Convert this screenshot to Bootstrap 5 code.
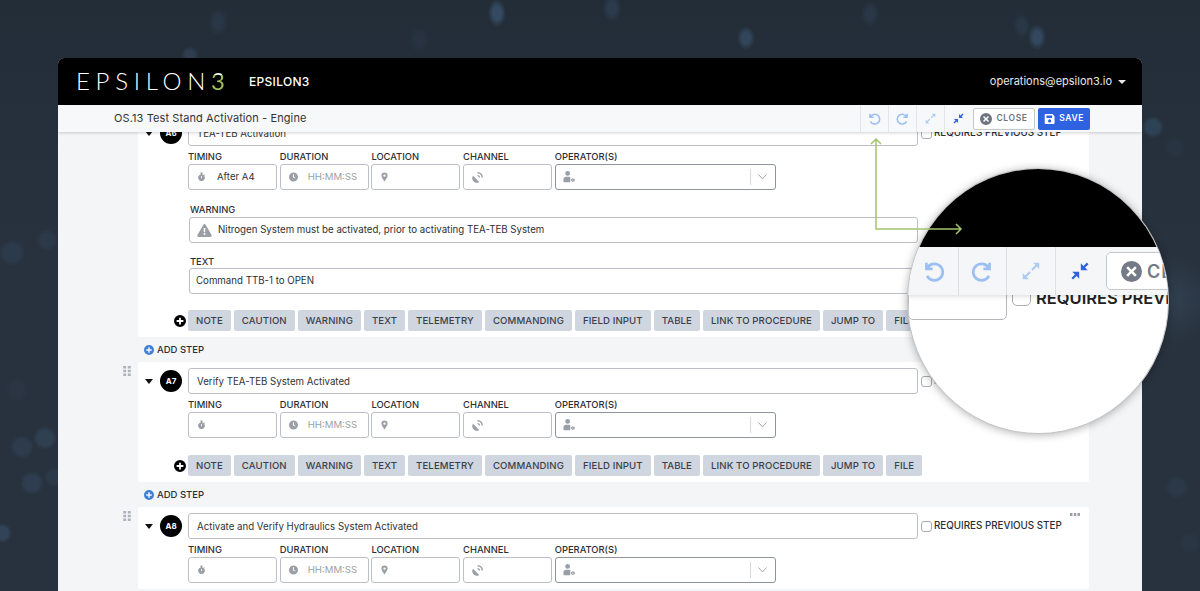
<!DOCTYPE html>
<html lang="en">
<head>
  <meta charset="UTF-8">
  <meta name="viewport" content="width=device-width, initial-scale=1.0">
  <title>Epsilon3 - Procedure Editor</title>
  <link href="https://cdn.jsdelivr.net/npm/bootstrap@5.3.3/dist/css/bootstrap.min.css" rel="stylesheet">
  <script src="https://cdn.jsdelivr.net/npm/bootstrap@5.3.3/dist/js/bootstrap.bundle.min.js" defer></script>
  <style>
    html, body { height: 100%; }
    body {
      position: relative;
      overflow: hidden;
      padding: 58px 58px 0;
      font-family: Inter, "Liberation Sans", sans-serif;
      color: #2b2f35;
      background-color: #28323e;
      background-image:
        radial-gradient(ellipse 9px 14px at 497px 13px, rgba(75,115,155,.42) 45%, transparent),
        radial-gradient(ellipse 9px 14px at 612px 8px, rgba(70,110,150,.22) 45%, transparent),
        radial-gradient(ellipse 9px 12px at 746px 38px, rgba(75,115,155,.35) 45%, transparent),
        radial-gradient(ellipse 9px 13px at 1037px 37px, rgba(75,115,155,.38) 45%, transparent),
        radial-gradient(ellipse 9px 12px at 1022px 26px, rgba(70,110,150,.14) 45%, transparent),
        radial-gradient(ellipse 10px 14px at 218px 22px, rgba(70,110,150,.14) 45%, transparent),
        radial-gradient(ellipse 10px 13px at 419px 40px, rgba(70,110,150,.08) 45%, transparent),
        radial-gradient(ellipse 9px 9px at 190px 55px, rgba(70,110,150,.25) 45%, transparent),
        radial-gradient(ellipse 9px 13px at 870px 14px, rgba(70,110,150,.14) 45%, transparent),
        radial-gradient(circle 13px at 12px 253px, rgba(60,95,130,.2) 60%, transparent),
        radial-gradient(circle 11px at 47px 240px, rgba(60,95,130,.15) 60%, transparent),
        radial-gradient(circle 12px at 17px 390px, rgba(60,95,130,.08) 60%, transparent),
        radial-gradient(circle 12px at 22px 447px, rgba(70,105,145,.18) 60%, transparent),
        radial-gradient(circle 12px at 45px 438px, rgba(70,105,145,.25) 60%, transparent),
        radial-gradient(circle 12px at 32px 483px, rgba(70,105,145,.22) 60%, transparent),
        radial-gradient(circle 10px at 54px 477px, rgba(70,105,145,.12) 60%, transparent),
        radial-gradient(circle 10px at 2px 533px, rgba(70,105,145,.3) 60%, transparent),
        radial-gradient(circle 11px at 1153px 127px, rgba(60,100,135,.35) 60%, transparent),
        radial-gradient(circle 11px at 1175px 147px, rgba(60,95,130,.08) 60%, transparent),
        radial-gradient(circle 12px at 1177px 487px, rgba(60,95,130,.14) 60%, transparent),
        radial-gradient(circle 11px at 1190px 543px, rgba(60,95,130,.08) 60%, transparent),
        radial-gradient(circle 45px at 1172px 300px, rgba(70,95,120,.3), transparent),
        linear-gradient(180deg, #232d38, #28323e 40%);
    }
    .app-window { width: 1084px; height: 533px; border-radius: 6px 6px 0 0; overflow: hidden; background: #f3f5f7; }
    .app-head { height: 47px; background: #000; padding: 0 16px 2px 18px; }
    .brand-word { font-family: Lato, sans-serif; font-weight: 300; font-size: 24px; letter-spacing: 5.7px; line-height: 1; color: #fff; width: 173px; white-space: nowrap; }
    .brand-word span { font-weight: 400; color: transparent; background: linear-gradient(#fff 32%, #9fc25f 32%); -webkit-background-clip: text; background-clip: text; }
    .brand-name { font-size: 12px; font-weight: 500; letter-spacing: .3px; color: #fff; margin-top: 2px; }
    .user-menu { font-size: 11px; color: #e8e8e8; margin-top: 2px; }
    .user-menu::after { margin-left: 6px; vertical-align: .1em; border-top-width: .37em; border-left-width: .37em; border-right-width: .37em; }

    .tool-bar { position: relative; z-index: 2; height: 27px; background: #f7f8f9; box-shadow: 0 1px 3px rgba(0,0,0,.18); padding-left: 56px; }
    .proc-title { font-size: 11px; letter-spacing: .1px; color: #333; }
    .tool-cell { width: 28px; height: 27px; border-left: 1px solid #e3e5e8; }
    .tool-cell svg { width: 13px; height: 13px; }
    .ic-soft { color: #9dc0f2; }
    .ic-pale { color: #aecbf1; }
    .ic-strong { color: #2f62e0; }
    .btn-close-proc, .btn-save-proc { height: 22px; padding: 0 6px; font-size: 8.5px; font-weight: 600; letter-spacing: .6px; border-radius: 2px; line-height: 1; }
    .btn-close-proc { width: 62px; margin-left: 1px; background: #fff; border: 1px solid #c4c8cd; color: #6d7480; }
    .btn-save-proc { width: 52px; margin: 0 52px 0 3px; background: #2f62e0; border: 0; color: #fff; }
    .btn-close-proc svg, .btn-save-proc svg { width: 12px; height: 12px; }

    .step-scroll { height: 474px; overflow: hidden; padding: 0 53px 0 60px; }
    .step-scroll > :first-child { margin-top: -18px; }
    .grip-col { width: 20px; padding: 4px 0 0 5px; }
    .grip-col svg { display: block; width: 8px; height: 10px; color: #aeb3ba; }
    .step-card { position: relative; width: 951px; background: #fff; padding: 6px 0 6px 7px; border-radius: 2px; }
    .step-left { width: 43px; height: 26px; }
    .caret-ic { width: 8px; height: 5px; margin-right: 7px; color: #111; }
    .step-num { width: 22px; height: 22px; border-radius: 50%; background: #000; color: #fff; font-size: 8px; font-weight: 700; }
    .title-input.form-control { width: 730px; height: 26px; min-height: 0; padding: 0 8px; font-size: 9.7px; color: #333; border: 1px solid #bcc0c6; border-radius: 3px; }
    .req-wrap { margin-left: 3px; font-size: 9.8px; font-weight: 500; white-space: nowrap; }
    .req-wrap .form-check-input { width: 11px; height: 11px; margin: 0 2px 0 0; border-color: #a9adb3; border-radius: 3px; }
    .dots-ic { position: absolute; right: 9px; top: 6px; width: 10px; height: 3px; color: #9aa0a7; }

    .field-label { height: 13px; margin-bottom: 1px; font-size: 9.4px; line-height: 13px; font-weight: 500; color: #2b2f35; }
    .field-row { gap: 0 2.7px; margin-top: 4px; }
    .field-box { width: 89px; height: 26px; padding-left: 8px; font-size: 9.6px; border: 1px solid #bcc0c6; border-radius: 3px; color: #333; }
    .field-box svg { width: 9px; height: 10px; color: #9a9fa6; flex: none; }
    .field-box .field-txt { margin-left: 11px; }
    .field-box .field-hint { margin-left: 10px; color: #9a9fa6; }
    .field-box svg.dish-ic { width: 11px; height: 11px; margin-left: 0; }
    .field-op { width: 221px; border-color: #8f949b; padding-left: 7px; }
    .field-box svg.op-ic { width: 13px; height: 12px; }
    .op-arrow { margin-left: auto; width: 25px; height: 16px; border-left: 1px solid #d5d8dc; }
    .op-arrow svg { width: 9px; height: 6px; color: #a2a7ad; }

    .block-wrap { margin-left: 1px; }
    .block-warn { margin-top: 13px; }
    .block-text { margin-top: 12px; }
    .block-label { height: 13px; margin-left: 1px; font-size: 9.4px; line-height: 13px; font-weight: 500; }
    .block-box { width: 729px; height: 26px; padding-left: 6px; font-size: 9.7px; border: 1px solid #bcc0c6; border-radius: 3px; }
    .block-box svg { width: 15px; height: 13px; margin: 0 6px 0 1px; color: #9a9fa6; }
    .block-warn .block-box { margin-top: 1px; }

    .add-row { margin-top: 17px; gap: 0 3px; }
    .block-text + .add-row { margin-top: 16px; }
    .add-ic { width: 12px; height: 12px; margin: 0 -1px 0 -14px; color: #000; }
    .add-chip.btn { height: 21px; padding: 0 8px; font-size: 9.6px; font-weight: 500; letter-spacing: .12px; line-height: 1; color: #39404a; background: #cfd6e0; border: 0; border-radius: 2px; white-space: nowrap; }

    .add-step { height: 25px; padding: 1px 0 0 26px; font-size: 9.5px; font-weight: 500; color: #2b2f35; }
    .add-step svg { width: 10px; height: 10px; margin-right: 3px; color: #3f7fd8; }

    .guide-arrow { position: absolute; left: 0; top: 0; z-index: 6; width: 1200px; height: 591px; pointer-events: none; }
    .zoom-lens { position: absolute; z-index: 5; left: 907px; top: 168px; width: 262px; height: 266px; border-radius: 50%; overflow: hidden; background: #fff; border: 1px solid #c2c4c6; box-shadow: 0 1px 8px rgba(0,0,0,.3); }
    .lens-black { height: 78px; background: #000; }
    .lens-tools { position: relative; z-index: 1; height: 48px; padding-left: 2px; background: #f5f6f8; box-shadow: 0 2px 4px rgba(0,0,0,.12); }
    .lens-cell { width: 48.500px; height: 48px; border-right: 1px solid #dcdee1; flex: none; }
    .lens-cell svg { width: 22px; height: 22px; }
    .lens-close { height: 38px; width: 110px; margin-left: 2px; padding-left: 14px; flex: none; font-size: 18px; font-weight: 600; letter-spacing: 1px; color: #747b87; background: #fff; border: 1px solid #c4c8cd; border-radius: 5px; }
    .lens-close svg { width: 21px; height: 21px; margin-right: 5px; }
    .lens-under { margin-top: -15px; }
    .lens-input { width: 99px; height: 40px; flex: none; border: 1px solid #b5b8bd; border-radius: 5px; }
    .lens-check { width: 19px; height: 26px; flex: none; margin: 0 5px 0 5px; border: 1px solid #a9adb3; border-radius: 5px; }
    .lens-req { flex: none; margin-top: 9px; font-size: 16.5px; font-weight: 600; line-height: 18px; white-space: nowrap; color: #222; }
  </style>
</head>
<body>
  <svg width="0" height="0" class="position-absolute">
    <symbol id="i-watch" viewBox="0 0 16 16"><path fill="currentColor" d="M6 0h4v2H9v1.100A6 6 0 1 1 7 3.100V2H6zM7.300 6v4h1.400V6zM13 3l1.500 1.400-1 1L12 4z"/></symbol>
    <symbol id="i-clock" viewBox="0 0 16 16"><path fill="currentColor" fill-rule="evenodd" d="M8 0a8 8 0 1 1 0 16A8 8 0 0 1 8 0zM7 3v5.600l3.600 2.200.9-1.300L8.800 7.800V3z"/></symbol>
    <symbol id="i-pin" viewBox="0 0 16 16"><path fill="currentColor" fill-rule="evenodd" d="M8 0a5.500 5.500 0 0 0-5.500 5.500C2.500 9.300 8 16 8 16s5.500-6.700 5.500-10.500A5.500 5.500 0 0 0 8 0zm0 3.400a2.100 2.100 0 1 1 0 4.200 2.100 2.100 0 0 1 0-4.200z"/></symbol>
    <symbol id="i-dish" viewBox="0 0 16 16"><path fill="currentColor" d="M1.500 5.500l9 9A6.500 6.500 0 0 1 1.500 5.500zM8 0a8 8 0 0 1 8 8h-2.200A5.800 5.800 0 0 0 8 2.200zM8 4.200A3.800 3.800 0 0 1 11.800 8H9.800A1.800 1.800 0 0 0 8 6.200z"/></symbol>
    <symbol id="i-usercog" viewBox="0 0 16 16"><path fill="currentColor" fill-rule="evenodd" d="M5.500 0a3.200 3.200 0 1 1 0 6.400A3.200 3.200 0 0 1 5.500 0zM0 15v-4a3.500 3.500 0 0 1 3.500-3.500h4A3.500 3.500 0 0 1 9 8v7zM13 9.500l.6 1 1.100-.3.600 1-.8.800.8.800-.6 1-1.100-.3-.6 1h-1.200l-.3-1-1.100.3-.6-1 .8-.8-.8-.8.6-1 1.100.3.3-1zm-.6 1.700a.8.800 0 1 0 0 1.600.8.800 0 0 0 0-1.600z"/></symbol>
    <symbol id="i-warn" viewBox="0 0 18 16"><path fill="currentColor" fill-rule="evenodd" d="M9 0c.6 0 1.100.3 1.400.8l7.300 12.700c.6 1-.1 2.500-1.400 2.500H1.700C.4 16-.3 14.500.3 13.500L7.600.8C7.900.3 8.400 0 9 0zM8 5l.2 5h1.600L10 5zm1 6.200a1.200 1.200 0 1 0 0 2.400 1.200 1.200 0 0 0 0-2.400z"/></symbol>
    <symbol id="i-undo" viewBox="0 0 16 16"><path fill="none" stroke="currentColor" stroke-width="2" d="M2.500 2v4.500H7M2.800 6.500A6 6 0 1 1 3 11.500"/></symbol>
    <symbol id="i-redo" viewBox="0 0 16 16"><path fill="none" stroke="currentColor" stroke-width="2" d="M13.500 2v4.500H9M13.200 6.500A6 6 0 1 0 13 11.500"/></symbol>
    <symbol id="i-expand" viewBox="0 0 16 16"><path fill="currentColor" d="M9.500 2H14v4.500l-1.700-1.700L9.300 7.800 8.200 6.700l3-3zM6.500 14H2V9.500l1.700 1.700 3-3 1.100 1.100-3 3z"/></symbol>
    <symbol id="i-compress" viewBox="0 0 16 16"><path fill="currentColor" d="M8.600 7.400V2.400l1.900 1.900L13 1.800 14.200 3l-2.500 2.500 1.900 1.900zM7.400 8.600v5l-1.900-1.900L3 14.200 1.800 13l2.500-2.500-1.900-1.900z"/></symbol>
    <symbol id="i-xcircle" viewBox="0 0 16 16"><path fill="currentColor" fill-rule="evenodd" d="M8 0a8 8 0 1 1 0 16A8 8 0 0 1 8 0zM5.400 4L4 5.400 6.600 8 4 10.600 5.400 12 8 9.400l2.600 2.600 1.400-1.400L9.400 8 12 5.400 10.600 4 8 6.600z"/></symbol>
    <symbol id="i-save" viewBox="0 0 16 16"><path fill="currentColor" fill-rule="evenodd" d="M2 1h10l3 3v9.500a1.500 1.500 0 0 1-1.500 1.500h-11A1.500 1.500 0 0 1 1 13.500v-11A1.500 1.500 0 0 1 2 1zm1.500 2v3.500h8V3zM8 8.500a2.300 2.300 0 1 0 0 4.600 2.300 2.300 0 0 0 0-4.600z"/></symbol>
    <symbol id="i-plus" viewBox="0 0 16 16"><path fill="currentColor" fill-rule="evenodd" d="M8 0a8 8 0 1 1 0 16A8 8 0 0 1 8 0zM6.800 3.500v3.300H3.500v2.400h3.300v3.300h2.400V9.200h3.300V6.800H9.200V3.500z"/></symbol>
    <symbol id="i-grip" viewBox="0 0 9 12"><path fill="currentColor" d="M0 0h3.500v3H0zM5.500 0H9v3H5.500zM0 4.500h3.500v3H0zM5.500 4.500H9v3H5.500zM0 9h3.500v3H0zM5.500 9H9v3H5.500z"/></symbol>
    <symbol id="i-caret" viewBox="0 0 8 5"><path fill="currentColor" d="M0 0h8L4 5z"/></symbol>
    <symbol id="i-dots" viewBox="0 0 10 3"><path fill="currentColor" d="M0 0h2.500v3H0zM3.800 0h2.500v3H3.800zM7.500 0H10v3H7.500z"/></symbol>
    <symbol id="i-chev" viewBox="0 0 9 6"><path fill="none" stroke="currentColor" d="M.5.500 4.500 5l4-4.500"/></symbol>
  </svg>

  <div class="app-window d-flex flex-column">
    <header class="app-head navbar flex-nowrap flex-shrink-0">
      <div class="d-flex align-items-center">
        <div class="brand-word">EPSILON<span>3</span></div>
        <div class="brand-name">EPSILON3</div>
      </div>
      <a class="user-menu dropdown-toggle text-decoration-none" href="#">operations@epsilon3.io</a>
    </header>

    <div class="tool-bar d-flex align-items-center flex-shrink-0">
      <div class="proc-title me-auto">OS.13 Test Stand Activation - Engine</div>
      <div class="tool-cell d-flex align-items-center justify-content-center ic-soft"><svg><use href="#i-undo"/></svg></div>
      <div class="tool-cell d-flex align-items-center justify-content-center ic-soft"><svg><use href="#i-redo"/></svg></div>
      <div class="tool-cell d-flex align-items-center justify-content-center ic-pale"><svg><use href="#i-expand"/></svg></div>
      <div class="tool-cell d-flex align-items-center justify-content-center ic-strong"><svg><use href="#i-compress"/></svg></div>
      <button class="btn btn-close-proc d-flex align-items-center justify-content-center gap-1 flex-shrink-0"><svg><use href="#i-xcircle"/></svg>CLOSE</button>
      <button class="btn btn-save-proc d-flex align-items-center justify-content-center gap-1 flex-shrink-0"><svg><use href="#i-save"/></svg>SAVE</button>
    </div>

    <main class="step-scroll" id="steps"></main>
  </div>

  <!-- magnifier over the undo / redo buttons -->
  <div class="zoom-lens d-flex flex-column">
    <div class="lens-black flex-shrink-0"></div>
    <div class="lens-tools d-flex align-items-center flex-shrink-0">
      <div class="lens-cell d-flex align-items-center justify-content-center ic-soft"><svg><use href="#i-undo"/></svg></div>
      <div class="lens-cell d-flex align-items-center justify-content-center ic-soft"><svg><use href="#i-redo"/></svg></div>
      <div class="lens-cell d-flex align-items-center justify-content-center ic-pale"><svg><use href="#i-expand"/></svg></div>
      <div class="lens-cell d-flex align-items-center justify-content-center ic-strong border-0"><svg><use href="#i-compress"/></svg></div>
      <div class="lens-close d-flex align-items-center"><svg><use href="#i-xcircle"/></svg>CLOSE</div>
    </div>
    <div class="lens-under d-flex">
      <div class="lens-input"></div>
      <div class="lens-check"></div>
      <div class="lens-req">REQUIRES PREVIOUS STEP</div>
    </div>
  </div>

  <svg class="guide-arrow" viewBox="0 0 1200 591">
    <path fill="none" stroke="#a3c46e" stroke-width="1.500" d="M871 144l5-5 5 5M876 139v90h85M956 224l5 5-5 5"/>
  </svg>

  <script>
    const chips = ['NOTE', 'CAUTION', 'WARNING', 'TEXT', 'TELEMETRY', 'COMMANDING', 'FIELD INPUT', 'TABLE', 'LINK TO PROCEDURE', 'JUMP TO', 'FILE'];
    const steps = [
      { id: 'A6', title: 'TEA-TEB Activation', timing: 'After A4',
        warning: 'Nitrogen System must be activated, prior to activating TEA-TEB System',
        text: 'Command TTB-1 to OPEN', adds: true },
      { id: 'A7', title: 'Verify TEA-TEB System Activated', timing: '', adds: true },
      { id: 'A8', title: 'Activate and Verify Hydraulics System Activated', timing: '', adds: false }
    ];

    function fieldCell(label, icon, inner) {
      return `<div>
        <div class="field-label">${label}</div>
        <div class="field-box d-flex align-items-center"><svg class="${icon === 'i-dish' ? 'dish-ic' : ''}"><use href="#${icon}"/></svg>${inner}</div>
      </div>`;
    }

    function stepHtml(step) {
      let blocks = '';
      if (step.warning) {
        blocks += `<div class="block-wrap block-warn">
          <div class="block-label">WARNING</div>
          <div class="block-box d-flex align-items-center"><svg><use href="#i-warn"/></svg>${step.warning}</div>
        </div>
        <div class="block-wrap block-text">
          <div class="block-label">TEXT</div>
          <div class="block-box d-flex align-items-center">${step.text}</div>
        </div>`;
      }
      let adds = '';
      if (step.adds) {
        adds = `<div class="add-row d-flex align-items-center">
          <svg class="add-ic"><use href="#i-plus"/></svg>
          ${chips.map(c => `<button class="add-chip btn">${c}</button>`).join('')}
        </div>`;
      }
      return `<div class="d-flex">
        <div class="grip-col flex-shrink-0"><svg><use href="#i-grip"/></svg></div>
        <section class="step-card d-flex">
          <svg class="dots-ic"><use href="#i-dots"/></svg>
          <div class="step-left d-flex align-items-center flex-shrink-0">
            <svg class="caret-ic"><use href="#i-caret"/></svg>
            <div class="step-num d-flex align-items-center justify-content-center">${step.id}</div>
          </div>
          <div>
            <div class="d-flex align-items-center">
              <input class="title-input form-control" value="${step.title}">
              <label class="req-wrap d-flex align-items-center"><input class="form-check-input" type="checkbox">REQUIRES PREVIOUS STEP</label>
            </div>
            <div class="field-row d-flex">
              ${fieldCell('TIMING', 'i-watch', step.timing ? `<span class="field-txt">${step.timing}</span>` : '')}
              ${fieldCell('DURATION', 'i-clock', '<span class="field-hint">HH:MM:SS</span>')}
              ${fieldCell('LOCATION', 'i-pin', '')}
              ${fieldCell('CHANNEL', 'i-dish', '')}
              <div>
                <div class="field-label">OPERATOR(S)</div>
                <div class="field-box field-op d-flex align-items-center"><svg class="op-ic"><use href="#i-usercog"/></svg>
                  <div class="op-arrow d-flex align-items-center justify-content-center"><svg><use href="#i-chev"/></svg></div>
                </div>
              </div>
            </div>
            ${blocks}
            ${adds}
          </div>
        </section>
      </div>`;
    }

    const addStep = `<div class="add-step d-flex align-items-center"><svg><use href="#i-plus"/></svg>ADD STEP</div>`;
    // the list is scrolled part way, so A6 starts under the toolbar
    document.getElementById('steps').innerHTML = steps.map(stepHtml).join(addStep);
  </script>
</body>
</html>
